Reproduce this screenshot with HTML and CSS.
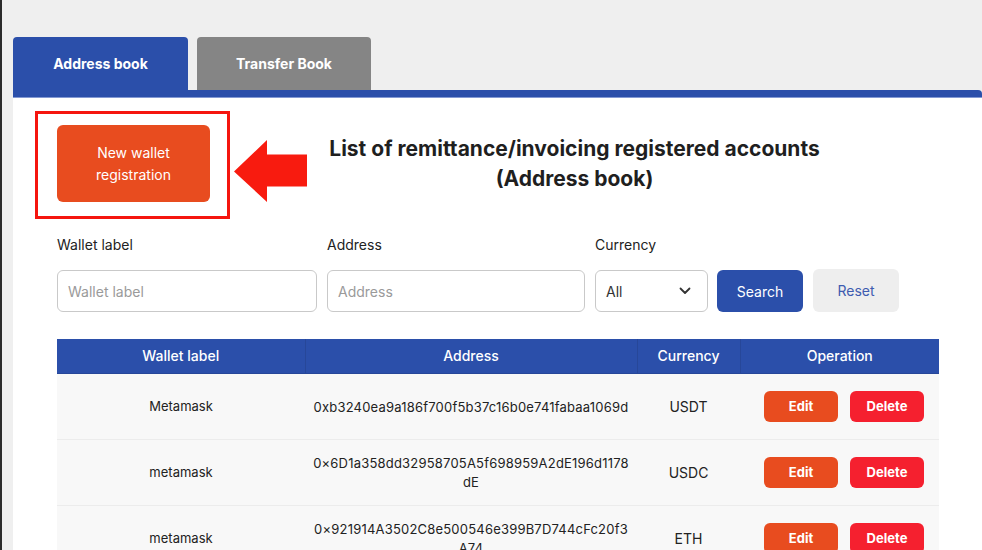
FILE: index.html
```html
<!DOCTYPE html>
<html lang="en">
<head>
<meta charset="utf-8">
<title>Address book</title>
<link rel="stylesheet" href="styles.css">
</head>
<body>
<div class="page">
  <div class="tabs">
    <div class="tab tab-active">Address book</div>
    <div class="tab tab-inactive">Transfer Book</div>
  </div>
  <div class="tab-line"></div>
  <div class="panel">
    <div class="top">
      <div class="highlight">
        <button class="btn-new">New wallet<br>registration</button>
      </div>
      <svg class="arrow" width="73" height="62" viewBox="0 0 73 62">
        <polygon points="0,31.5 33,0 33,14.5 73,14.5 73,46.5 33,46.5 33,62" fill="#f81b0f"/>
      </svg>
      <h1 class="title">List of remittance/invoicing registered accounts<br>(Address book)</h1>
    </div>

    <div class="filters">
      <div class="field f-label">
        <label>Wallet label</label>
        <div class="input">Wallet label</div>
      </div>
      <div class="field f-address">
        <label>Address</label>
        <div class="input">Address</div>
      </div>
      <div class="field f-currency">
        <label>Currency</label>
        <div class="select"><span>All</span>
          <svg width="12" height="8" viewBox="0 0 12 8"><polyline points="1.5,1.5 6,6 10.5,1.5" fill="none" stroke="#333" stroke-width="1.8" stroke-linecap="round" stroke-linejoin="round"/></svg>
        </div>
      </div>
      <button class="btn-search">Search</button>
      <button class="btn-reset">Reset</button>
    </div>

    <table class="list">
      <thead>
        <tr>
          <th class="c-label">Wallet label</th>
          <th class="c-addr">Address</th>
          <th class="c-cur">Currency</th>
          <th class="c-op">Operation</th>
        </tr>
      </thead>
      <tbody>
        <tr>
          <td class="c-label">Metamask</td>
          <td class="c-addr">0xb3240ea9a186f700f5b37c16b0e741fabaa1069d</td>
          <td class="c-cur">USDT</td>
          <td class="c-op"><div class="ops"><button class="btn-edit">Edit</button><button class="btn-del">Delete</button></div></td>
        </tr>
        <tr>
          <td class="c-label">metamask</td>
          <td class="c-addr">0×6D1a358dd32958705A5f698959A2dE196d1178dE</td>
          <td class="c-cur">USDC</td>
          <td class="c-op"><div class="ops"><button class="btn-edit">Edit</button><button class="btn-del">Delete</button></div></td>
        </tr>
        <tr>
          <td class="c-label">metamask</td>
          <td class="c-addr">0×921914A3502C8e500546e399B7D744cFc20f3A74</td>
          <td class="c-cur">ETH</td>
          <td class="c-op"><div class="ops"><button class="btn-edit">Edit</button><button class="btn-del">Delete</button></div></td>
        </tr>
      </tbody>
    </table>
  </div>
</div>
</body>
</html>
```
FILE: styles.css
```css
* { box-sizing: border-box; }
html, body { margin: 0; padding: 0; }
body {
  font-family: Inter, "Liberation Sans", sans-serif;
  color: #222;
  background: #efefef;
  overflow: hidden;
}
.page {
  border-left: 2px solid #2b2b2b;
  background: #efefef;
  padding: 37px 0 0 11px;
  min-height: 550px;
}
.tabs { display: flex; gap: 9px; }
.tab {
  width: 175px;
  height: 53px;
  border-radius: 4px 4px 0 0;
  color: #fff;
  font-weight: 700;
  font-size: 14px;
  display: flex;
  align-items: center;
  justify-content: center;
  padding-bottom: 1px;
}
.tab-active { background: #2b4faa; }
.tab-inactive { background: #858585; width: 174px; }
.tab-line {
  height: 8px;
  background: #2b4faa;
  border-bottom: 1px solid #8399d3;
  border-top-right-radius: 4px;
}
.panel {
  background: #fff;
  padding: 13px 0 0 22px;
  min-height: 460px;
}
.top { display: flex; align-items: flex-start; }
.highlight {
  border: 3px solid #f5150f;
  padding: 11px 17px 14px 19px;
  width: 195px;
}
.btn-new {
  width: 153px;
  height: 77px;
  border: none;
  border-radius: 6px;
  background: #e84c1f;
  color: #fff;
  font-family: inherit;
  font-size: 14px;
  line-height: 22px;
  padding: 0;
}
.arrow { margin: 29px 0 0 4px; flex: none; }
.title {
  flex: 1;
  margin: 23px 140px 0 0;
  text-align: center;
  font-size: 21px;
  line-height: 30px;
  font-weight: 700;
  color: #1f1f1f;
}
.filters {
  display: flex;
  align-items: flex-end;
  margin: 16px 0 0 22px;
}
.field { display: flex; flex-direction: column; gap: 15px; margin-right: 10px; }
.field label { font-size: 14px; line-height: 20px; color: #222; }
.f-label { width: 260px; }
.f-address { width: 258px; }
.f-currency { width: 113px; margin-right: 9px; }
.input, .select {
  height: 42px;
  border: 1px solid #c9c9c9;
  border-radius: 6px;
  font-size: 14px;
  display: flex;
  align-items: center;
  padding: 0 10px;
}
.input { color: #9a9a9a; }
.select { justify-content: space-between; color: #333; padding: 0 16px 0 10px; }
.btn-search, .btn-reset {
  width: 86px;
  height: 42px;
  border: none;
  border-radius: 6px;
  font-family: inherit;
  font-size: 14px;
  padding: 0;
}
.btn-search { background: #2b4faa; color: #fff; margin-right: 10px; }
.btn-reset { background: #eeeeee; color: #3e5cb0; height: 43px; }
.list {
  margin: 27px 0 0 22px;
  width: 882px;
  border-collapse: collapse;
  table-layout: fixed;
}
.list th {
  background: #2b4faa;
  color: #fff;
  font-weight: 500;
  font-size: 14px;
  height: 34px;
  padding: 0;
  border-left: 1px solid #274799;
  border-bottom: 1px solid #274799;
}
.list th:first-child { border-left: none; }
.c-label { width: 248px; }
.c-addr { width: 332px; }
.c-cur { width: 103px; }
.c-op { width: 199px; }
.list td {
  background: #f8f8f8;
  height: 66px;
  padding: 0 5px;
  text-align: center;
  vertical-align: middle;
  font-size: 13px;
  line-height: 19px;
  border-bottom: 1px solid #ececec;
  color: #222;
}
.list td.c-addr { word-break: break-all; letter-spacing: 0.2px; padding: 2px 6px 0; }
.list td.c-cur { font-size: 14px; }
.ops { display: flex; justify-content: center; gap: 12px; padding-left: 9px; }
.btn-edit, .btn-del {
  width: 74px;
  height: 31px;
  border: none;
  border-radius: 6px;
  color: #fff;
  font-family: inherit;
  font-weight: 700;
  font-size: 13px;
  padding: 0;
}
.btn-edit { background: #e84c1f; }
.btn-del { background: #f5202f; }
```
